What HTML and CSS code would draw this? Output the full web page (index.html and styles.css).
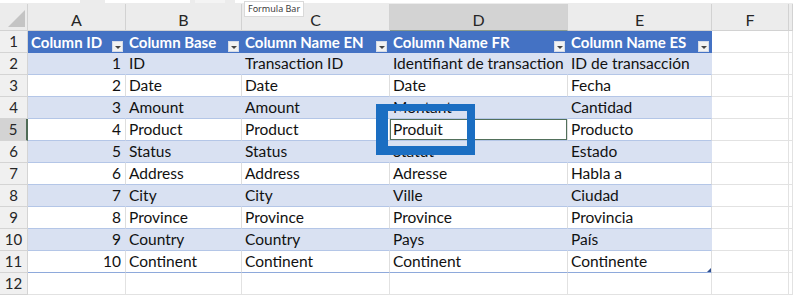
FILE: index.html
```html
<!DOCTYPE html>
<html lang="en">
<head>
    <meta charset="UTF-8">
    <title>Column Names</title>
    <link rel="stylesheet" href="styles.css">
</head>
<body>
    <div class="sheet">
        <!-- bottom edge of the formula bar, cut off by the screenshot -->
        <div class="bar-edge">
            <span class="box name-box"></span>
            <span class="box fx-box"></span>
            <span class="box small-box"></span>
            <span class="box input-box"></span>
        </div>

        <table class="grid">
            <colgroup>
                <col class="w-head">
                <col class="w-a">
                <col class="w-b">
                <col class="w-c">
                <col class="w-d">
                <col class="w-e">
                <col class="w-f">
                <col>
            </colgroup>
            <thead>
                <tr>
                    <th class="corner"><span class="corner-mark"></span></th>
                    <th>A</th>
                    <th>B</th>
                    <th>C</th>
                    <th class="picked">D</th>
                    <th>E</th>
                    <th>F</th>
                    <th></th>
                </tr>
            </thead>
            <tbody>
                <tr class="tbl-head">
                    <th>1</th>
                    <td><div class="hd">Column ID<span class="filter"></span></div></td>
                    <td><div class="hd">Column Base<span class="filter"></span></div></td>
                    <td><div class="hd">Column Name EN<span class="filter"></span></div></td>
                    <td><div class="hd">Column Name FR<span class="filter"></span></div></td>
                    <td class="last"><div class="hd">Column Name ES<span class="filter"></span></div></td>
                    <td class="out"></td><td class="out"></td>
                </tr>
                <tr class="band">
                    <th>2</th>
                    <td class="num">1</td><td>ID</td><td>Transaction ID</td><td>Identifiant de transaction</td><td class="last">ID de transacción</td>
                    <td class="out"></td><td class="out"></td>
                </tr>
                <tr>
                    <th>3</th>
                    <td class="num">2</td><td>Date</td><td>Date</td><td>Date</td><td class="last">Fecha</td>
                    <td class="out"></td><td class="out"></td>
                </tr>
                <tr class="band">
                    <th>4</th>
                    <td class="num">3</td><td>Amount</td><td>Amount</td><td>Montant</td><td class="last">Cantidad</td>
                    <td class="out"></td><td class="out"></td>
                </tr>
                <tr>
                    <th class="picked-row">5</th>
                    <td class="num">4</td><td>Product</td><td>Product</td><td class="active">Produit</td><td class="last">Producto</td>
                    <td class="out"></td><td class="out"></td>
                </tr>
                <tr class="band">
                    <th>6</th>
                    <td class="num">5</td><td>Status</td><td>Status</td><td>Statut</td><td class="last">Estado</td>
                    <td class="out"></td><td class="out"></td>
                </tr>
                <tr>
                    <th>7</th>
                    <td class="num">6</td><td>Address</td><td>Address</td><td>Adresse</td><td class="last">Habla a</td>
                    <td class="out"></td><td class="out"></td>
                </tr>
                <tr class="band">
                    <th>8</th>
                    <td class="num">7</td><td>City</td><td>City</td><td>Ville</td><td class="last">Ciudad</td>
                    <td class="out"></td><td class="out"></td>
                </tr>
                <tr>
                    <th>9</th>
                    <td class="num">8</td><td>Province</td><td>Province</td><td>Province</td><td class="last">Provincia</td>
                    <td class="out"></td><td class="out"></td>
                </tr>
                <tr class="band">
                    <th>10</th>
                    <td class="num">9</td><td>Country</td><td>Country</td><td>Pays</td><td class="last">País</td>
                    <td class="out"></td><td class="out"></td>
                </tr>
                <tr class="tbl-end">
                    <th>11</th>
                    <td class="num">10</td><td>Continent</td><td>Continent</td><td>Continent</td><td class="last corner-cell">Continente<span class="resize"></span></td>
                    <td class="out"></td><td class="out"></td>
                </tr>
                <tr class="empty">
                    <th>12</th>
                    <td></td><td></td><td></td><td></td><td></td><td></td><td></td>
                </tr>
            </tbody>
        </table>

        <div class="tooltip">Formula Bar</div>
        <!-- blue annotation frame drawn over the selected cell -->
        <div class="callout"></div>
    </div>
</body>
</html>
```

FILE: styles.css
```css
*, *::before, *::after {
    box-sizing: border-box;
}

html, body {
    margin: 0;
    height: 100%;
    background: #fff;
}

body {
    font: 15.5px/1 'Lato', 'Open Sans', sans-serif;
    color: #111;
    overflow: hidden;
}

.sheet {
    position: relative;
    width: 793px;
    height: 296px;
}

/* what is left of the formula bar above the grid */
.bar-edge {
    display: flex;
    height: 4px;
    background: #ececec;
}

.box {
    display: block;
    height: 3px;
    background: #fff;
}

.name-box {
    width: 80px;
}

.fx-box {
    width: 85px;
    margin-left: 25px;
}

.small-box {
    width: 30px;
    margin-left: 5px;
    background: #f4f4f4;
}

.input-box {
    flex: 1;
    margin-left: 10px;
}

.grid {
    table-layout: fixed;
    border-collapse: separate;
    border-spacing: 0;
    width: 793px;
}

.w-head { width: 28px; }
.w-a { width: 98px; }
.w-b { width: 116px; }
.w-c { width: 148px; }
.w-d { width: 178px; }
.w-e { width: 144px; }
.w-f { width: 77px; }

th, td {
    padding: 0 3px;
    border-right: 1px solid #dedede;
    border-bottom: 1px solid #dedede;
    white-space: nowrap;
    overflow: hidden;
    font-weight: normal;
    text-align: left;
}

/* column letters */
thead th {
    height: 27px;
    padding-top: 6px;
    background: #ececec;
    border-color: #d2d2d2;
    color: #262626;
    font-size: 16px;
    text-align: center;
}

thead th.picked {
    background: #d3d3d3;
    border-bottom: 1px solid #8a9a8e;
}

.corner {
    position: relative;
}

.corner-mark {
    position: absolute;
    right: 2px;
    bottom: 3px;
    width: 0;
    height: 0;
    border-left: 17px solid transparent;
    border-bottom: 17px solid #c4c4c4;
}

tbody tr {
    height: 22px;
}

/* row numbers */
tbody th {
    padding: 0;
    background: #f0f0f0;
    border-color: #d4d4d4;
    color: #262626;
    font-size: 15px;
    text-align: center;
}

tbody th.picked-row {
    background: #d3d3d3;
    border-right: 2px solid #4f6b56;
}

td.num {
    text-align: right;
    padding-right: 4px;
}

td.out, .empty td {
    border-color: #e2e2e2;
}

/* excel table styling */
.tbl-head td:not(.out) {
    background: #4472c4;
    border-color: #4472c4;
    color: #fff;
    font-size: 15px;
    font-weight: bold;
}

.hd {
    display: flex;
    justify-content: space-between;
    align-items: flex-end;
    padding-top: 1px;
}

.filter {
    position: relative;
    flex: none;
    width: 11px;
    height: 11px;
    margin-right: -1px;
    margin-bottom: -2px;
    background: #f2f2f2;
    border: 1px solid #d6dce8;
}

.filter::after {
    content: "";
    position: absolute;
    left: 2px;
    top: 4px;
    border-left: 3px solid transparent;
    border-right: 3px solid transparent;
    border-top: 3px solid #444;
}

tbody tr:not(.tbl-head):not(.empty) td:not(.out) {
    border-bottom-color: #b4c6e7;
}

.band td:not(.out) {
    background: #d9e1f2;
    border-right-color: #d9e1f2;
}

td.last {
    border-right-color: #dedede;
}

.band td.last {
    border-right-color: #d9e1f2;
}

.tbl-end td:not(.out) {
    border-bottom-color: #8ea9db !important;
}

td.active {
    box-shadow: inset 0 0 0 1px #52705b;
}

.corner-cell {
    position: relative;
}

.resize {
    position: absolute;
    right: 0;
    bottom: 0;
    width: 0;
    height: 0;
    border-left: 4px solid transparent;
    border-bottom: 4px solid #2f4f8f;
}

.tooltip {
    position: absolute;
    left: 244px;
    top: 1px;
    padding: 2px 3px 3px;
    background: #fff;
    border: 1px solid #d9d9d9;
    color: #3c3c3c;
    font: 9px/1 'Noto Sans', sans-serif;
}

.callout {
    position: absolute;
    left: 376px;
    top: 104px;
    width: 99px;
    height: 51px;
    border-style: solid;
    border-color: #1b6ec2;
    border-width: 7px 8px 9px 12px;
}
```
